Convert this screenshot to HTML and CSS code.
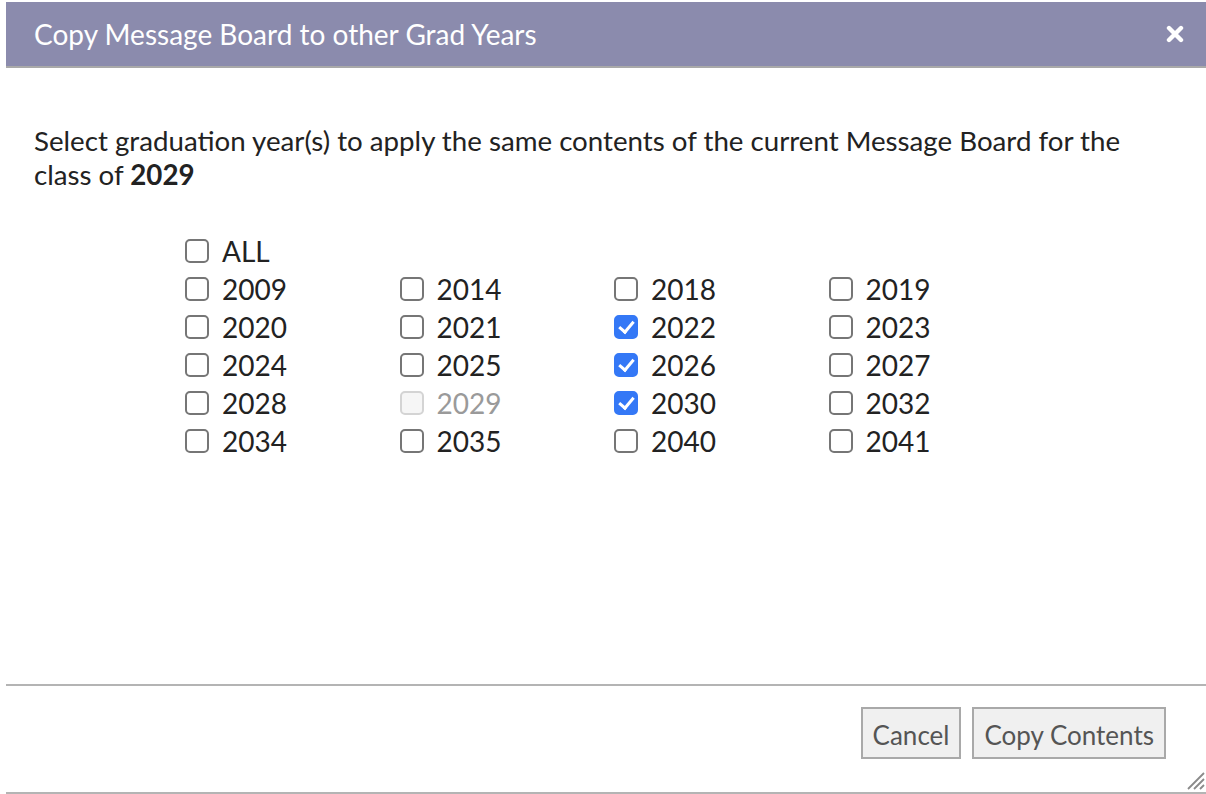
FILE: index.html
```html
<!DOCTYPE html>
<html>
<head>
<meta charset="utf-8">
<link rel="stylesheet" href="styles.css">
</head>
<body>
<div class="dialog">
  <div class="titlebar">
    <span class="title">Copy Message Board to other Grad Years</span>
    <span class="close" aria-label="close">
      <svg width="18" height="18" viewBox="0 0 18 18"><path d="M3 3 L15 15 M15 3 L3 15" stroke="#fff" stroke-width="4.4" stroke-linecap="round"/></svg>
    </span>
  </div>
  <div class="content">
    <p class="intro">Select graduation year(s) to apply the same contents of the current Message Board for the class of <b>2029</b></p>
    <div class="years">
      <label class="opt all"><input type="checkbox"><span>ALL</span></label>
      <label class="opt"><input type="checkbox"><span>2009</span></label>
      <label class="opt"><input type="checkbox"><span>2014</span></label>
      <label class="opt"><input type="checkbox"><span>2018</span></label>
      <label class="opt"><input type="checkbox"><span>2019</span></label>
      <label class="opt"><input type="checkbox"><span>2020</span></label>
      <label class="opt"><input type="checkbox"><span>2021</span></label>
      <label class="opt"><input type="checkbox" checked><span>2022</span></label>
      <label class="opt"><input type="checkbox"><span>2023</span></label>
      <label class="opt"><input type="checkbox"><span>2024</span></label>
      <label class="opt"><input type="checkbox"><span>2025</span></label>
      <label class="opt"><input type="checkbox" checked><span>2026</span></label>
      <label class="opt"><input type="checkbox"><span>2027</span></label>
      <label class="opt"><input type="checkbox"><span>2028</span></label>
      <label class="opt disabled"><input type="checkbox" disabled><span>2029</span></label>
      <label class="opt"><input type="checkbox" checked><span>2030</span></label>
      <label class="opt"><input type="checkbox"><span>2032</span></label>
      <label class="opt"><input type="checkbox"><span>2034</span></label>
      <label class="opt"><input type="checkbox"><span>2035</span></label>
      <label class="opt"><input type="checkbox"><span>2040</span></label>
      <label class="opt"><input type="checkbox"><span>2041</span></label>
    </div>
  </div>
  <div class="footer">
    <button class="btn">Cancel</button>
    <button class="btn">Copy Contents</button>
    <span class="grip">
      <svg width="22" height="22" viewBox="0 0 22 22"><path d="M21 5 L5 21 M21 11 L11 21 M21 17 L17 21" stroke="#8a8a8a" stroke-width="1.8"/></svg>
    </span>
  </div>
</div>
</body>
</html>
```

FILE: styles.css
```css
* { box-sizing: border-box; }
html, body { margin: 0; padding: 0; background: #fff; }
body { font-family: Lato, "Open Sans", sans-serif; color: #222; }

.dialog {
  margin: 2px 0 0 6px;
  width: 1200px;
  height: 792px;
  display: flex;
  flex-direction: column;
  border-bottom: 2px solid #b4b4b4;
  position: relative;
}

.titlebar {
  height: 66px;
  background: #8b8bad;
  border-bottom: 2px solid #a9a9a9;
  display: flex;
  align-items: center;
  justify-content: space-between;
  padding: 0 22px 0 28px;
  flex: none;
}
.title { color: #fff; font-size: 28px; line-height: 1; padding-bottom: 0; }
.close { display: flex; }

.content { flex: 1; padding: 56px 28px 0 28px; }
.intro { margin: 0; font-size: 27.7px; line-height: 34px; color: #222; }
.intro b { font-weight: 700; }

.years {
  margin: 40px 0 0 151px;
  display: grid;
  grid-template-columns: repeat(4, 214.5px);
  row-gap: 0;
}
.opt { display: flex; align-items: center; height: 38px; font-size: 28px; color: #222; }
.opt.all { grid-column: 1 / 5; }
.opt input {
  appearance: none;
  -webkit-appearance: none;
  margin: 0 13px 0 0;
  width: 24px;
  height: 24px;
  border: 2px solid #767676;
  border-radius: 5px;
  background: #fff;
  flex: none;
  position: relative;
}
.opt input:checked {
  background: #3478f6;
  border-color: #3478f6;
}
.opt input:checked::after {
  content: "";
  position: absolute;
  left: 6px;
  top: 1px;
  width: 6px;
  height: 12px;
  border: solid #fff;
  border-width: 0 3.4px 3.4px 0;
  transform: rotate(40deg);
}
.opt.disabled input { border-color: #d4d4d4; background: #f6f6f6; }
.opt.disabled span { color: #9a9a9a; }

.footer {
  flex: none;
  height: 108px;
  border-top: 2px solid #b4b4b4;
  display: flex;
  justify-content: flex-end;
  align-items: flex-start;
  gap: 11px;
  padding: 21px 40px 0 0;
  position: relative;
}
.btn {
  font-family: Lato, "Open Sans", sans-serif;
  font-size: 26px;
  color: #555;
  background: #f0f0f0;
  border: 2px solid #a9a9a9;
  height: 52px;
  padding: 3px 10px 0 10px;
  border-radius: 0;
}
.grip { position: absolute; right: 1px; bottom: 2px; display: flex; }
```
